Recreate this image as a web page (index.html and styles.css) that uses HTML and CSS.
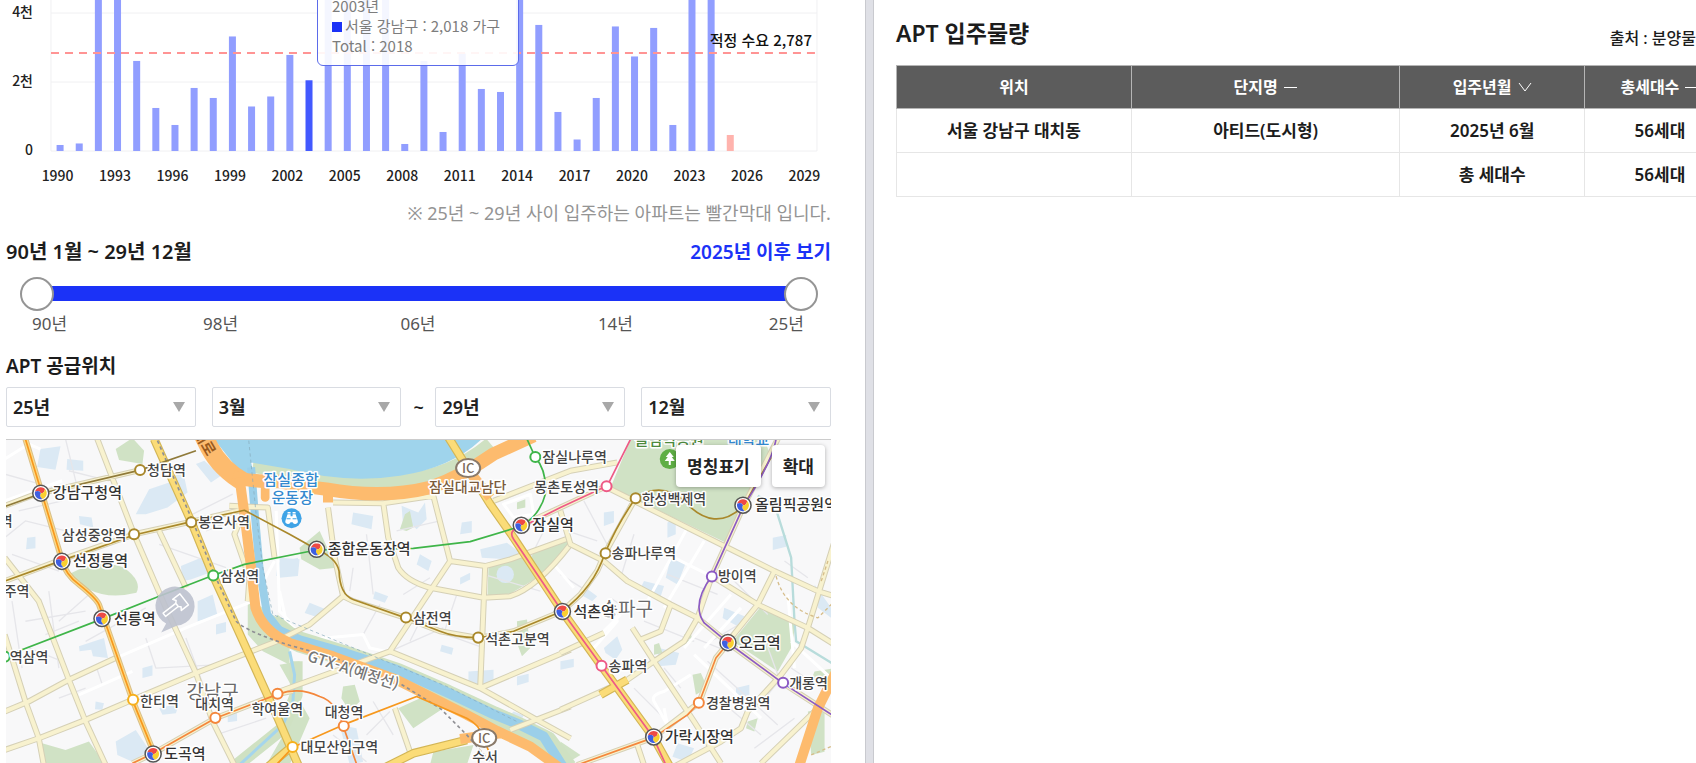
FILE: index.html
```html
<!DOCTYPE html>
<html lang="ko">
<head>
  <meta charset="UTF-8" />
  <meta name="viewport" content="width=device-width, initial-scale=1.0"/>
  <title>APT 입주물량</title>
  <link rel="stylesheet" href="styles.css">
</head>
<body>
  <section class="supply">
    <div class="chart">
      <svg id="chart" viewBox="0 0 825 190" role="img" aria-label="연도별 입주물량"></svg>
      <div class="tooltip">
        <div>2003년</div>
        <div><span class="swatch"></span>서울 강남구 : 2,018 가구</div>
        <div>Total : 2018</div>
      </div>
    </div>
    <p class="note">※ 25년 ~ 29년 사이 입주하는 아파트는 빨간막대 입니다.</p>

    <div class="range-head">
      <h2>90년 1월 ~ 29년 12월</h2>
      <a href="#">2025년 이후 보기</a>
    </div>
    <div class="slider">
      <input type="range" min="1990" max="2029" value="1990" aria-label="시작 연도">
      <input type="range" min="1990" max="2029" value="2029" aria-label="종료 연도">
    </div>
    <div class="ticks">
      <span>90년</span><span>98년</span><span>06년</span><span>14년</span><span>25년</span>
    </div>

    <h3>APT 공급위치</h3>
    <div class="filters">
      <label class="select"><select aria-label="시작 년"><option>25년</option></select></label>
      <label class="select"><select aria-label="시작 월"><option>3월</option></select></label>
      <span class="tilde">~</span>
      <label class="select"><select aria-label="종료 년"><option>29년</option></select></label>
      <label class="select"><select aria-label="종료 월"><option>12월</option></select></label>
    </div>

    <div class="map">
      <svg viewBox="6 441 825 322" preserveAspectRatio="xMidYMin slice" role="img" aria-label="지도">
        <defs>
          <g id="transfer">
            <circle r="8" fill="#fff" stroke="#555" stroke-width="1.5"/>
            <path d="M0 0Q-1.500 -3.200 -5.800 -1.500A6 6 0 0 1 4.200 -4.200Q3.500 .3 0 0Z" fill="#ee4a45"/>
            <path d="M0 0Q3.500 .3 4.200 -4.200A6 6 0 0 1 1.500 5.800Q-2 2.900 0 0Z" fill="#f9cf2f"/>
            <path d="M0 0Q-2 2.900 1.500 5.800A6 6 0 0 1 -5.800 -1.500Q-1.500 -3.200 0 0Z" fill="#3e5fe0"/>
          </g>
        </defs>

        <!-- geometry is drawn on a 3x grid -->
        <g transform="translate(0 435) scale(.33333)">
          <rect class="land" x="0" y="0" width="2520" height="1000"/>

          <!-- buildings -->
          <g class="block">
            <path d="M125 45l60-8-15 70-55-8zM205 75l48 5v30l-50-3zM410 240l40-75 60-20 40-40 15 70-60 45-65 20zM85 310l25-3v35l-28 3zM240 245l38 5 5 30-40-10zM545 395l60-25 25 45-55 20-25 5zM595 500l45-20 15 65-60 15zM240 635l75-25 12 60-45-5-5-20-35 5zM650 570l30-8v30l-30 8zM430 700l30-8v30l-30 8zM350 920l60-35 40 60-50 35-45-20zM290 800l25 5-5 20-22-2zM685 835l28-5v28l-28 4zM835 385l60-15v55h-65zM480 820l60-15-10 30-40 5z"/>
            <path d="M840 370l60 5-5 50-55 5zM1060 235l60 10-5 40-60-15zM1205 215l50 20 20-30 5 50-30 30-20-20-20 15zM1385 265l30-5v35l-35 5zM1260 360l35 20-10 30-35-20zM1125 470l40 15-10 20-35-12zM1440 345l80-20 40 30-40 20-75-5zM1380 430l30-15v20l-30 15zM1325 630l35 10-5 20-35-10zM1405 710l75-5v40l-75 10zM930 505l50 20-20 25-45-15zM1550 725l35-8v25l-35 10zM1680 680l40-8v25l-40 8z"/>
            <path d="M1810 235l30-5v35l-30 10zM2000 265l25-15v50l-25 10zM2315 310l40-8v35l-40 10zM1755 460l35 25-15 15-35-20zM1930 440l60 15-10 30-60-25zM2010 370l45 15-25 65-35-20zM2170 520l60 25-20 30-45-25zM1810 640l40-35 15 40-20 30-30-20zM1975 640l60 15-10 35-60 5zM2205 760l40-10v30l-40 8zM2030 925l50 15-20 40-45-15zM2440 450l50 70v30l-40-30zM1540 830l30 12-10 20-40-12zM1020 870l50 10 20 100-40 10zM2220 20l60 0 0 60-30 60zM590 90l25-10 50 45-30 20z"/>
          </g>

          <!-- parks -->
          <g class="park">
            <path d="M1890 15L1830 160L2175 325L2230 215L2310 70L2290 15Z"/>
            <path d="M205 422Q300 370 375 400Q430 440 412 475Q330 495 270 465Z"/>
            <path d="M350 45L400 12L435 50L430 90L360 78Z"/>
            <path d="M130 925L200 945L270 920L320 990L135 990Z"/>
            <path d="M1465 395L1540 375L1705 305L1705 340L1620 425L1530 478L1462 482Z"/>
            <path d="M2280 515L2385 560L2370 640L2330 710L2195 620Z"/>
            <path d="M900 340L960 290L1010 400L960 405L905 375Z"/>
            <path d="M745 480L800 530L870 570L870 690L790 650L745 600ZM840 690L900 680L880 850L800 990L870 990L930 850Z"/>
            <path d="M1030 755L1065 750L1080 800L1050 830L1025 790ZM1195 820L1260 790L1330 820L1270 860L1240 880ZM1300 950L1420 930L1400 990L1290 990ZM1550 560L1580 555L1590 640L1565 665L1552 630ZM1200 285L1215 240L1230 230L1240 280L1220 290ZM1550 205L1575 195V220L1550 225Z"/>
            <path d="M2075 720L2100 715L2120 760L2085 780ZM1960 630L1975 625L1985 655L1960 660ZM2050 600L2070 595L2075 620L2050 630ZM2440 710L2500 700V740L2430 735ZM2240 860L2270 850L2260 890L2235 880ZM1680 920L1740 960L1690 990ZM2420 830L2470 820V950L2430 960Z"/>
          </g>
          <circle class="block" cx="1515" cy="420" r="26"/>

          <!-- local streets -->
          <g class="lane">
            <path d="M18 120L230 180M60 230L190 200M200 15L240 180M18 310L80 260L200 290M40 360L180 410M80 560L260 530M40 500L70 700M260 620L440 520M310 750L290 690M440 610L470 700L660 690M210 110L330 140M480 330L680 400M560 250L700 180M620 290L720 250M560 610L630 800M650 900L800 850M180 790L260 760M270 480L180 560M90 640L190 680M240 560L140 600M150 470L180 700"/>
            <path d="M1010 330L1170 335M1060 400L1050 470M1100 300L1120 480M1190 290L1320 260M1210 480L1290 430M1370 480L1330 600M1260 560L1230 620M1450 420L1620 470M1170 650L1330 580M1340 600L1450 640M1090 600L1140 510M1170 830L1100 900M1120 800L1180 900M1000 900L1100 980M1630 290L1590 370M1500 200L1600 160"/>
            <path d="M1700 290L1790 320M1750 200L1830 350M1680 420L1760 470M1830 490L1900 540M1900 300L1860 430M2000 420L2150 480M2190 430L2300 540M2350 380L2420 430M2080 610L2180 650M2120 680L2330 870M1900 760L2000 860M1930 560L2080 620M2290 610L2330 720M2150 790L2280 900M2380 680L2300 780M2040 760L1990 700M2260 940L2380 850M2370 700L2460 760M2230 560L2130 620"/>
          </g>
          <g class="street">
            <path d="M18 75L90 30L125 45M18 200L190 140M18 215L120 165M240 780L400 710M350 670L560 580L760 500M760 500L825 380M830 230L840 530L870 560M870 620L1090 600L1110 640L1180 655M840 470L860 560L950 640"/>
            <path d="M1510 210L1540 250L1600 240L1590 180ZM1660 390L1720 460M1780 640L1850 560L1830 490M1680 655L1800 600L1860 540M2060 280L1940 500M2110 320L1990 520M1960 340L2180 450M2080 660L2280 850M1990 820L2000 870L1960 800Q1950 780 1990 770L2070 720M2360 480L2380 700M2370 620L2500 740M2190 480L2050 640M2220 520L2110 640"/>
          </g>

          <!-- river and stream -->
          <path class="bank" d="M760 98L870 112Q1040 158 1200 140T1470 28" />
          <path class="water" d="M640 10L735 130L765 130L755 85L870 105Q1040 150 1200 125T1450 10Z"/>
          <path class="bank wide" d="M815 565L865 605L900 622L1040 665L1190 715L1340 780L1480 845L1560 880L1640 920L1700 1000"/>
          <path class="bank" d="M890 680L890 780L850 880L700 1000"/>
          <path class="stream narrow" d="M755 100L766 240L780 400L803 540L850 600"/>
          <path class="stream" d="M830 585L900 617L1040 657L1190 705L1340 772L1480 838L1560 870L1630 905L1690 1000"/>
          <path class="brook" d="M870 650L885 720L880 800L850 870L720 990"/>
          <path class="canal" d="M2270 185L2320 210L2370 370L2380 560L2385 620L2500 690"/>

          <!-- secondary roads -->
          <g id="minor">
            <path class="road-case" d="M295 15L405 300L500 520L590 715L640 860L705 990M480 290L560 460M18 370L120 500L210 735L260 860L320 990M18 600L80 800L120 910L135 990M18 830L90 800L210 735L350 670M18 945L120 910L260 855L400 795L590 715L870 605M690 215L805 220L825 370M735 230L705 300L750 430L745 500M18 215L105 182L423 108M18 440L190 375L405 300L577 262L735 225M400 985L463 955L648 850L835 778L880 768"/>
            <path class="road" d="M295 15L405 300L500 520L590 715L640 860L705 990M480 290L560 460M18 370L120 500L210 735L260 860L320 990M18 600L80 800L120 910L135 990M18 830L90 800L210 735L350 670M18 945L120 910L260 855L400 795L590 715L870 605M690 215L805 220L825 370M735 230L705 300L750 430L745 500M18 215L105 182L423 108M18 440L190 375L405 300L577 262L735 225M400 985L463 955L648 850L835 778L880 768"/>
            <path class="road-case" d="M985 220L1005 370L1030 485L930 570L850 610M1030 485L1060 500L1217 550L1320 590L1435 610L1540 590L1685 530M1150 205L1165 310L1195 400Q1220 440 1290 460L1450 490L1530 485Q1610 460 1710 330M1000 205L1150 207L1300 185L1350 380L1455 395L1530 375L1710 310M1350 380L1290 470L1170 650L840 770M1455 395L1440 760M1170 650L1440 760L1610 855L1710 910M1440 760L1710 645M1530 885L1710 815M1480 200L1710 110L1850 85M1185 820L1230 950"/>
            <path class="road" d="M985 220L1005 370L1030 485L930 570L850 610M1030 485L1060 500L1217 550L1320 590L1435 610L1540 590L1685 530M1150 205L1165 310L1195 400Q1220 440 1290 460L1450 490L1530 485Q1610 460 1710 330M1000 205L1150 207L1300 185L1350 380L1455 395L1530 375L1710 310M1350 380L1290 470L1170 650L840 770M1455 395L1440 760M1170 650L1440 760L1610 855L1710 910M1440 760L1710 645M1530 885L1710 815M1480 200L1710 110L1850 85M1185 820L1230 950"/>
            <path class="road-case" d="M1820 160L2170 335L2320 410L2450 470L2500 485M1680 230L1710 330L1810 380L1880 440L2010 510L2090 550L2182 625L2345 745L2500 845M2133 425L2270 510L2420 580L2500 630M2320 410L2270 510L2190 610M2500 320L2420 580L2400 640L2340 720L2240 830L2220 880L2160 920L2010 1000M1895 580L1960 680L2080 860L2160 985M2010 510L1980 590L1920 615M2090 550L2050 620L1960 680L1880 735L1680 825M2280 985L2450 820M1910 930L1930 990M1680 655L1810 595M1904 193L1813 357L1790 410L1740 480L1685 530M2330 15L2228 215L2133 425L2090 550M2182 625L2145 670L2095 803L1958 908L1730 990M1560 275L1680 220L1820 155"/>
            <path class="road" d="M1820 160L2170 335L2320 410L2450 470L2500 485M1680 230L1710 330L1810 380L1880 440L2010 510L2090 550L2182 625L2345 745L2500 845M2133 425L2270 510L2420 580L2500 630M2320 410L2270 510L2190 610M2500 320L2420 580L2400 640L2340 720L2240 830L2220 880L2160 920L2010 1000M1895 580L1960 680L2080 860L2160 985M2010 510L1980 590L1920 615M2090 550L2050 620L1960 680L1880 735L1680 825M2280 985L2450 820M1910 930L1930 990M1680 655L1810 595M1904 193L1813 357L1790 410L1740 480L1685 530M2330 15L2228 215L2133 425L2090 550M2182 625L2145 670L2095 803L1958 908L1730 990M1560 275L1680 220L1820 155"/>
          </g>
          <path class="trail" d="M2325 425Q2350 520 2450 550L2500 500M2460 440L2480 380M2430 960L2500 930"/>

          <!-- trunk roads -->
          <path class="main-case" d="M465 15L575 260L640 420L740 640L835 850L900 1000M1345 10L1470 210L1540 310L1685 530L1800 690L1960 910L2010 1000M1150 1000L1240 955L1400 915M800 1000L870 940M1800 780L1880 735"/>
          <path class="main" d="M465 15L575 260L640 420L740 640L835 850L900 1000M1345 10L1470 210L1540 310L1685 530L1800 690L1960 910L2010 1000M1150 1000L1240 955L1400 915M800 1000L870 940M1800 780L1880 735"/>
          <path class="main-case thin" d="M80 15L130 180L190 380Q200 420 240 450Q290 490 300 510L400 795L465 955"/>
          <path class="main thin" d="M80 15L130 180L190 380Q200 420 240 450Q290 490 300 510L400 795L465 955"/>
          <path class="express wide" d="M595 -30L630 40Q665 105 735 145"/>
          <path class="express" d="M700 128Q740 142 840 142Q900 155 980 165Q1150 195 1290 160Q1380 130 1480 60L1600 5"/>
          <path class="express mid" d="M720 130L735 240L755 400L768 520Q790 590 870 625L1000 665L1190 735L1300 790L1400 840L1490 888L1590 935L1680 1000M985 160V205M1470 190L1390 90M1380 912L1500 895M2505 710L2450 820L2395 990"/>
          <path class="express ramp" d="M797 140V190"/>

          <!-- railways -->
          <path class="gtx" d="M475 20L580 260L645 420L710 560Q740 590 870 632L1000 668L1190 740L1320 820L1400 900L1470 980"/>
          <path class="gtx faint" d="M748 20L770 240L790 400L820 540L1340 755L1550 860"/>
          <path class="line" stroke="#8f7a3a" d="M18 217L127 178L423 108L590 50"/>
          <path class="line" stroke="#f7981d" d="M80 15L130 180L190 380Q200 420 240 450Q290 490 300 510L400 795L465 955M820 1000L880 937L1030 870L1250 785L1400 850Q1440 870 1450 910L1470 960"/>
          <path class="line" stroke="#a9882b" d="M18 440L190 378L405 302L577 262L735 228L870 300L950 345Q1010 370 1018 410Q1020 480 1060 495L1217 550L1320 590Q1360 607 1435 610L1540 590L1685 530Q1780 460 1813 357Q1850 270 1904 193Q1980 140 2050 200Q2140 300 2228 215L2310 70"/>
          <path class="line" stroke="#3fb549" d="M18 665L310 553L480 485L640 423L735 390L950 347L1240 342L1410 322L1565 275Q1620 240 1635 180Q1640 110 1605 70L1580 15"/>
          <path class="line" stroke="#f4873c" d="M400 985L463 955L648 850L835 778Q900 755 960 785Q1010 800 1030 873L1075 1000M1730 990L1958 908L2060 840L2095 803L2145 670L2182 625"/>
          <path class="line" stroke="#ee5a86" d="M1890 15L1820 155L1680 220L1570 275Q1520 285 1540 315L1685 530L1803 693L1958 908L2000 1000"/>
          <path class="line" stroke="#8c5bc4" d="M2325 15Q2315 80 2228 215L2133 425Q2070 510 2110 565L2182 625L2345 745L2500 845"/>
        </g>

        <!-- stations -->
        <g class="stop">
          <circle cx="141" cy="471" r="5" stroke="#a9882b"/><circle cx="135" cy="535" r="5" stroke="#a9882b"/>
          <circle cx="192" cy="523" r="5" stroke="#a9882b"/><circle cx="214" cy="576" r="5" stroke="#3fb549"/>
          <circle cx="6" cy="657" r="5" stroke="#3fb549"/><circle cx="134" cy="700" r="5" stroke="#f6b01d"/>
          <circle cx="216" cy="718" r="5" stroke="#f4873c"/><circle cx="278" cy="694" r="5" stroke="#f4873c"/>
          <circle cx="535" cy="458" r="5" stroke="#3fb549"/><circle cx="606" cy="487" r="5" stroke="#ee5a86"/>
          <circle cx="406" cy="618" r="5" stroke="#a9882b"/><circle cx="478" cy="638" r="5" stroke="#a9882b"/>
          <circle cx="344" cy="726" r="5" stroke="#f4873c"/><circle cx="293" cy="747" r="5" stroke="#f6b01d"/>
          <circle cx="635" cy="499" r="5" stroke="#a9882b"/><circle cx="605" cy="554" r="5" stroke="#a9882b"/>
          <circle cx="711" cy="577" r="5" stroke="#8c5bc4"/><circle cx="601" cy="666" r="5" stroke="#ee5a86"/>
          <circle cx="782" cy="683" r="5" stroke="#8c5bc4"/><circle cx="698" cy="703" r="5" stroke="#f4873c"/>
        </g>
        <use href="#transfer" x="42" y="494"/><use href="#transfer" x="63" y="562"/>
        <use href="#transfer" x="103" y="619"/><use href="#transfer" x="154" y="754"/>
        <use href="#transfer" x="317" y="550"/><use href="#transfer" x="521" y="526"/>
        <use href="#transfer" x="562" y="612"/><use href="#transfer" x="742" y="506"/>
        <use href="#transfer" x="727" y="643"/><use href="#transfer" x="653" y="737"/>

        <g class="ic">
          <ellipse cx="468" cy="469" rx="12" ry="9"/><text x="468" y="474">IC</text>
          <ellipse cx="484" cy="738" rx="12" ry="9"/><text x="484" y="743">IC</text>
        </g>

        <!-- stadium and park badges -->
        <circle cx="292" cy="519" r="10" fill="#3fa3e6"/>
        <path d="M288 515h3v2h2v-2h3l1 3 1 3a2.500 2.500 0 0 1-5 2h-2a2.500 2.500 0 0 1-5-2l1-3z" fill="#fff"/>
        <path d="M288 513.500h3M293 513.500h3" stroke="#fff" stroke-width="1.500"/>
        <path d="M287 519.500h4M293 519.500h4" stroke="#3fa3e6"/>
        <circle cx="669" cy="460" r="10" fill="#5fae45"/>
        <path d="M669 453l4 5h-2l3 4h-4v4h-2v-4h-4l3-4h-2z" fill="#fff"/>

        <!-- auction marker -->
        <path d="M167 624L162 633L178 626A19.500 19.500 0 1 0 167 624Z" fill="#bcc1ce" opacity=".9"/>
        <g transform="translate(177 606) rotate(-38)" fill="none" stroke="#fff" stroke-width="1.500" stroke-linejoin="round">
          <path d="M1 -7H10V7H1L3 4L1 2V-2L3 -4Z"/>
          <path d="M1 -2H-15V2H1"/>
        </g>

        <g class="district"><text x="187" y="699">강남구</text><text x="600" y="616">송파구</text></g>
        <g class="name">
          <text x="148" y="476">청담역</text><text x="1" y="527">역</text><text x="63" y="541">삼성중앙역</text>
          <text x="199" y="528">봉은사역</text><text x="221" y="582">삼성역</text><text x="5" y="597">주역</text>
          <text x="11" y="662">역삼역</text><text x="141" y="706">한티역</text><text x="196" y="709">대치역</text>
          <text x="252" y="714">학여울역</text><text x="542" y="463">잠실나루역</text><text x="534" y="493">몽촌토성역</text>
          <text x="413" y="623">삼전역</text><text x="485" y="644">석촌고분역</text><text x="325" y="717">대청역</text>
          <text x="301" y="752">대모산입구역</text><text x="641" y="505">한성백제역</text><text x="611" y="559">송파나루역</text>
          <text x="717" y="582">방이역</text><text x="608" y="671">송파역</text><text x="788" y="688">개롱역</text>
          <text x="705" y="708">경찰병원역</text><text x="472" y="762">수서</text>
        </g>
        <g class="name big">
          <text x="54" y="499">강남구청역</text><text x="74" y="567">선정릉역</text><text x="115" y="624">선릉역</text>
          <text x="165" y="759">도곡역</text><text x="328" y="555">종합운동장역</text><text x="532" y="531">잠실역</text>
          <text x="573" y="617">석촌역</text><text x="754" y="511">올림픽공원역</text><text x="738" y="648">오금역</text>
          <text x="664" y="742">가락시장역</text>
        </g>
        <text class="place brown" x="429" y="493">잠실대교남단</text>
        <text class="road-name" transform="translate(194 434) rotate(60)">대로</text>
        <text class="place blue" x="264" y="486">잠실종합</text>
        <text class="place blue" x="272" y="504">운동장</text>
        <text class="place green" x="634" y="446">올림픽공원</text>
        <text class="place blue" x="727" y="446">대학교</text>
        <text class="gtx-name" transform="translate(307 661) rotate(18)">GTX-A(예정선)</text>
      </svg>
      <div class="map-buttons">
        <button type="button">명칭표기</button>
        <button type="button">확대</button>
      </div>
    </div>
  </section>

  <div class="divider"></div>

  <section class="list">
    <header>
      <h1>APT 입주물량</h1>
      <span>출처 : 분양물</span>
    </header>
    <table>
      <thead>
        <tr>
          <th class="col-place">위치</th>
          <th class="col-name">단지명 <svg class="sort" viewBox="0 0 14 12"><path d="M0 6.500h13"/></svg></th>
          <th class="col-date">입주년월 <svg class="sort" viewBox="0 0 14 12"><path d="M1 2l6 8 6-8"/></svg></th>
          <th class="col-count">총세대수 <svg class="sort" viewBox="0 0 14 12"><path d="M0 6.500h13"/></svg></th>
        </tr>
      </thead>
      <tbody>
        <tr><td>서울 강남구 대치동</td><td>아티드(도시형)</td><td>2025년 6월</td><td>56세대</td></tr>
        <tr><td></td><td></td><td>총 세대수</td><td>56세대</td></tr>
      </tbody>
    </table>
  </section>

  <script src="chart.js"></script>
</body>
</html>
```
FILE: styles.css
```css
:root {
  --blue: #1b32f7;
  --text: #1c1c1c;
  --line: #e6e6e6;
}

* {
  box-sizing: border-box;
}

body {
  margin: 0;
  display: flex;
  height: 100vh;
  overflow: hidden;
  background-color: #fff;
  color: var(--text);
  font-family: "Noto Sans", "Noto Sans CJK KR", sans-serif;
}

h1, h2, h3, p {
  margin: 0;
}

.supply {
  flex: 0 0 51%;
  display: flex;
  flex-direction: column;
  padding: 0 34px 0 6px;
}

/* chart */
.chart {
  position: relative;
  font-family: "Noto Sans CJK KR", sans-serif;
}

.chart svg {
  display: block;
  width: 100%;
}

.grid {
  stroke: #f0f0f2;
  fill: none;
}

.bar {
  fill: #919eff;
}

.bar.active {
  fill: #4359ff;
}

.bar.future {
  fill: #ffb3ad;
}

.average {
  stroke: #ff9494;
  stroke-width: 2;
  stroke-dasharray: 8 6;
}

.axis {
  font-size: 14px;
  font-weight: 500;
  fill: #222;
}

.average-label {
  font-size: 15px;
  font-weight: 500;
  fill: #111;
}

.tooltip {
  position: absolute;
  top: -8px;
  left: 37.7%;
  padding: 3px 18px 9px 14px;
  border: 1px solid #5b6bea;
  border-radius: 6px;
  background-color: rgba(255, 255, 255, 0.9);
  color: #7d7d7d;
  font-size: 15px;
  line-height: 20px;
  white-space: nowrap;
}

.swatch {
  display: inline-block;
  width: 10px;
  height: 10px;
  margin-right: 3px;
  background-color: var(--blue);
}

.note {
  padding-top: 10px;
  color: #949494;
  font-size: 18px;
  line-height: 26px;
  text-align: right;
}

/* period slider */
.range-head {
  display: flex;
  justify-content: space-between;
  align-items: center;
  margin-top: 12px;
  line-height: 28px;
}

.range-head h2 {
  font-size: 20px;
  font-weight: 600;
}

.range-head a {
  color: var(--blue);
  font-size: 19px;
  font-weight: 600;
  text-decoration: none;
}

.slider {
  position: relative;
  height: 34px;
  margin: 11px 13px 0 14px;
}

.slider::before {
  content: "";
  position: absolute;
  top: 9px;
  left: 16px;
  right: 16px;
  height: 15px;
  background-color: var(--blue);
}

.slider input {
  position: absolute;
  width: 100%;
  height: 34px;
  margin: 0;
  appearance: none;
  background: none;
  pointer-events: none;
}

.slider input::-webkit-slider-thumb {
  appearance: none;
  width: 34px;
  height: 34px;
  border: 2px solid #959595;
  border-radius: 50%;
  background-color: #fff;
  pointer-events: auto;
}

.ticks {
  display: grid;
  grid-template-columns: 90fr 198fr 198fr 198fr 90fr;
  margin: 0 27px 0 26px;
  color: #555;
  font-size: 17px;
  line-height: 26px;
  text-align: center;
}

.ticks span:first-child {
  text-align: left;
}

.ticks span:last-child {
  text-align: right;
}

/* filters */
h3 {
  margin-top: 15px;
  font-size: 19px;
  font-weight: 600;
  line-height: 28px;
}

.filters {
  display: flex;
  align-items: center;
  gap: 16px;
  margin-top: 7px;
}

.select {
  position: relative;
  flex: 1;
}

.select::after {
  content: "";
  position: absolute;
  top: 15px;
  right: 11px;
  border: 6px solid transparent;
  border-top: 10px solid #a8a8a8;
  border-bottom: 0;
  pointer-events: none;
}

select {
  width: 100%;
  height: 40px;
  padding: 0 6px;
  appearance: none;
  border: 1px solid #d9dce2;
  border-radius: 2px;
  background-color: #fff;
  color: #222;
  font-family: inherit;
  font-size: 18px;
  font-weight: 600;
}

.tilde {
  width: 10px;
  margin: 0 -4px;
  font-size: 18px;
  font-weight: 600;
}

/* map */
.map {
  position: relative;
  flex: 1;
  min-height: 0;
  margin-top: 12px;
  border-top: 1px solid #ccc;
  font-family: "Noto Sans CJK KR", sans-serif;
}

.map > svg {
  display: block;
  width: 100%;
  height: 100%;
}

.map path {
  stroke-linejoin: round;
}

.land { fill: #f8f8f9; }
.block { fill: #dbe9f4; }
.park { fill: #d0e2c5; }
.water { fill: #9fd4ec; }

.lane, .street, .bank, .stream, .brook, .canal, .trail, .road, .road-case,
.main, .main-case, .express, .gtx, .line {
  fill: none;
}

.lane { stroke: #e6e6ea; stroke-width: 4; }
.street { stroke: #fff; stroke-width: 9; }
.bank { stroke: #cfe1c2; stroke-width: 38; }
.bank.wide { stroke-width: 62; }
.stream { stroke: #9bcfe9; stroke-width: 30; }
.stream.narrow { stroke-width: 24; }
.brook { stroke: #a5d5ec; stroke-width: 9; }
.canal { stroke: #b8dcdb; stroke-width: 7; }
.trail { stroke: #d6bd8a; stroke-width: 4; stroke-dasharray: 10 8; }
.road-case { stroke: #d5d0b6; stroke-width: 18; }
.road { stroke: #f8f2cf; stroke-width: 12; }
.main-case { stroke: #d3b657; stroke-width: 26; }
.main { stroke: #fbdc78; stroke-width: 19; }
.main-case.thin { stroke: #d8c08a; stroke-width: 18; }
.main.thin { stroke: #fdda87; stroke-width: 12; }
.express { stroke: #fdbb6e; stroke-width: 40; }
.express.wide { stroke-width: 56; }
.express.mid { stroke-width: 30; }
.express.ramp { stroke-width: 26; stroke-linecap: round; }
.gtx { stroke: #8f8f94; stroke-width: 5; stroke-dasharray: 10 9; }
.gtx.faint { stroke: #86a9ba; stroke-width: 2; }
.line { stroke-width: 5; }

.stop circle {
  fill: #fff;
  stroke-width: 2;
}

.name, .district, .place, .gtx-name {
  paint-order: stroke;
  stroke: #fff;
  stroke-width: 3px;
  stroke-linejoin: round;
}

.name {
  fill: #444;
  font-size: 14px;
  font-weight: 500;
}

.name.big {
  fill: #333;
  font-size: 15px;
}

.district {
  fill: #6a6a6a;
  font-size: 19px;
}

.place {
  font-size: 14px;
  font-weight: 500;
}

.brown { fill: #7a5a3a; }
.blue { fill: #3489cf; font-size: 15px; }
.green { fill: #4c8a3d; font-size: 15px; }

.road-name {
  fill: #9a5a1e;
  font-size: 15px;
  font-weight: 700;
}

.gtx-name {
  fill: #777;
  font-size: 15px;
  font-weight: 500;
}

.ic ellipse {
  fill: #fff;
  stroke: #8a7a6a;
  stroke-width: 2;
}

.ic text {
  fill: #7a6a5a;
  font-size: 13px;
  font-weight: 500;
  text-anchor: middle;
}

.map-buttons {
  position: absolute;
  top: 5px;
  right: 6px;
  display: flex;
  gap: 11px;
}

.map-buttons button {
  height: 42px;
  padding: 0 11px;
  border: 0;
  border-radius: 4px;
  background-color: #fff;
  box-shadow: 0 1px 4px rgba(0, 0, 0, 0.3);
  color: #222;
  font-family: inherit;
  font-size: 17px;
  font-weight: 600;
}

/* list */
.divider {
  flex: 0 0 9px;
  border: solid #c9cacf;
  border-width: 0 1px;
  background-color: #dfe0e6;
}

.list {
  flex: 1;
  min-width: 0;
  padding: 14px 0 0 22px;
}

.list header {
  display: flex;
  justify-content: space-between;
  align-items: flex-end;
  height: 51px;
  padding-bottom: 14px;
}

h1 {
  font-size: 23px;
  font-weight: 600;
  line-height: 36px;
}

.list header span {
  font-size: 16px;
  font-weight: 500;
  line-height: 26px;
}

table {
  width: 105%;
  border-collapse: collapse;
  table-layout: fixed;
  text-align: center;
}

.col-place { width: 28%; }
.col-name { width: 32%; }
.col-date { width: 22%; }
.col-count { width: 18%; }

th, td {
  height: 44px;
  padding: 0 0 3px;
  border: 1px solid var(--line);
  font-size: 17px;
  font-weight: 600;
}

th {
  height: 43px;
  border-color: #b5b5b5;
  background-color: #5c5c5c;
  color: #fff;
  font-size: 16px;
}

.sort {
  width: 14px;
  height: 12px;
  margin-left: 2px;
  fill: none;
  stroke: #fff;
}
```
FILE: chart.js
```js
// households per year, 1990 onwards (values over the visible range are cut by the top edge)
const supply = [
  174, 218, 5200, 5400, 2610, 1247, 754, 1827, 1537, 3320,
  1290, 1580, 2784, 2050, 5300, 5100, 5600, 5200, 203, 2610,
  551, 2827, 1798, 1711, 5100, 3654, 1131, 333, 1537, 3610,
  2740, 3567, 754, 5400, 5400, 464
];

const left = 45, right = 811, base = 151;
const step = (right - left) / 40;
const y = value => base - value * 0.0345;

let out = '';
[0, 2000, 4000].forEach(v => {
  out += `<line class="grid" x1="${left}" x2="${right}" y1="${y(v)}" y2="${y(v)}"/>`;
  out += `<text class="axis" x="27" y="${y(v) + 4}" text-anchor="end">${v ? v / 1000 + '천' : 0}</text>`;
});
out += `<path class="grid" d="M${left} 0V${base}M${right} 0V${base}"/>`;

supply.forEach((value, i) => {
  const year = 1990 + i;
  const type = year === 2003 ? ' active' : year >= 2025 ? ' future' : '';
  const x = left + step * (i + 0.5) - 4;
  out += `<rect class="bar${type}" x="${x}" y="${y(value)}" width="7" height="${base - y(value)}"/>`;
});

out += `<line class="average" x1="${left}" x2="${right}" y1="53" y2="53"/>`;
out += `<text class="average-label" x="806" y="46" text-anchor="end">적정 수요 2,787</text>`;

for (let year = 1990; year < 2030; year += 3) {
  out += `<text class="axis" x="${left + step * (year - 1990 + 0.5) - 3}" y="181" text-anchor="middle">${year}</text>`;
}

document.getElementById('chart').innerHTML = out;
```
